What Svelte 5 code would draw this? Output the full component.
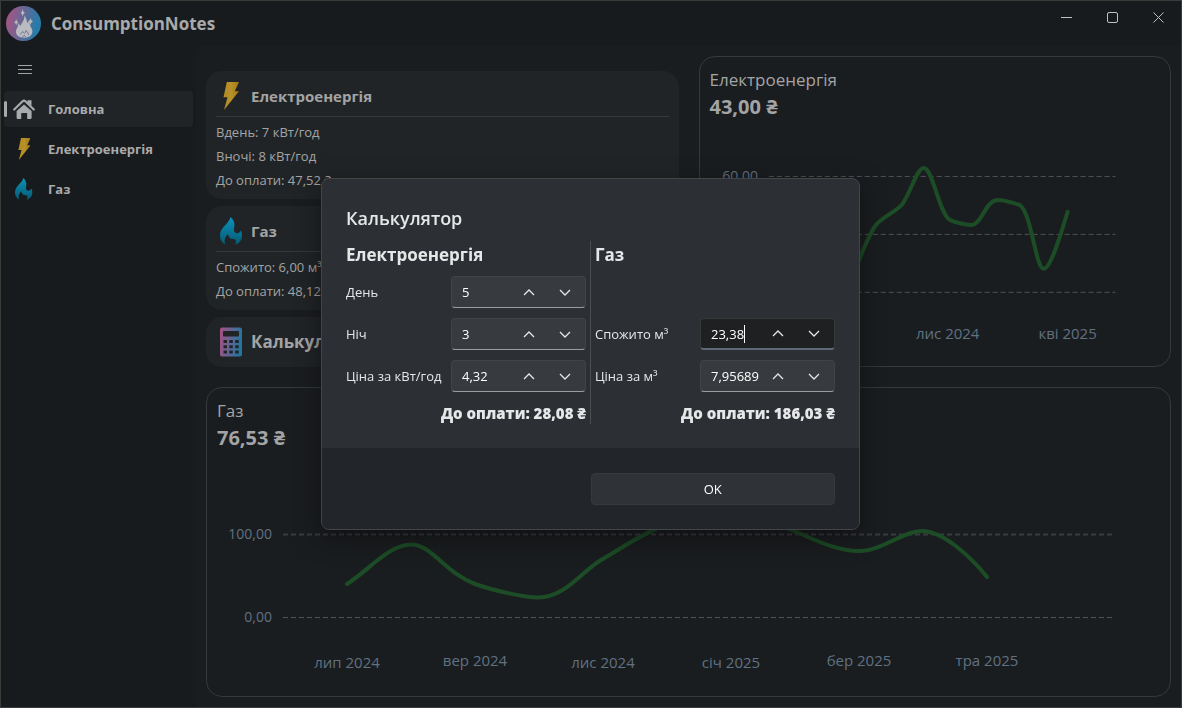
<script>
  const nav = [
    { label: 'Головна', icon: 'home', active: true },
    { label: 'Електроенергія', icon: 'bolt', active: false },
    { label: 'Газ', icon: 'flame', active: false }
  ];
  const powerFields = [
    { id: 'day', label: 'День', value: '5' },
    { id: 'night', label: 'Ніч', value: '3' },
    { id: 'power-price', label: 'Ціна за кВт/год', value: '4,32' }
  ];
  const gasFields = [
    { id: 'gas-used', label: 'Спожито м³', value: '23,38', focused: true },
    { id: 'gas-price', label: 'Ціна за м³', value: '7,95689' }
  ];
  const powerMonths = [
    { x: 126, y: 216, label: 'чер 2024' },
    { x: 248, y: 218, label: 'лис 2024' },
    { x: 368, y: 218, label: 'кві 2025' }
  ];
  const gasMonths = [
    { x: 140, y: 216, label: 'лип 2024' },
    { x: 268, y: 214, label: 'вер 2024' },
    { x: 396, y: 216, label: 'лис 2024' },
    { x: 524, y: 216, label: 'січ 2025' },
    { x: 652, y: 214, label: 'бер 2025' },
    { x: 780, y: 214, label: 'тра 2025' }
  ];
</script>

{#snippet icon(name)}
  {#if name === 'home'}
    <svg class="glyph home" viewBox="0 0 22 20" aria-hidden="true">
      <path d="M14.5 1.2h4v5.6l-4-3.4z" fill="#a9abac" />
      <path d="M1.2 10.6 9.6 2.3q1.4-1.2 2.8 0l8.4 8.3" fill="none" stroke="#a9abac" stroke-width="2.1" stroke-linecap="round" stroke-linejoin="round" />
      <path d="M3.6 12 11 5.6l7.600 6.400v6.800q0 1.200-1.200 1.200h-3.200v-5.200q0-.8-.8-.8H9q-.8 0-.8.8V20H4.800q-1.200 0-1.200-1.200z" fill="#a9abac" />
    </svg>
  {:else if name === 'bolt'}
    <svg class="glyph" viewBox="0 0 16 28" aria-hidden="true">
      <defs><linearGradient id="bolt" x1="0" x2="1"><stop stop-color="#b48a22" /><stop offset=".5" stop-color="#b79129" /><stop offset="1" stop-color="#a37717" /></linearGradient></defs>
      <path d="M3.8 0H16l-4.2 9.3H16L1 28l3.5-12.7H.5z" fill="url(#bolt)" />
    </svg>
  {:else}
    <svg class="glyph" viewBox="0 0 22 28" aria-hidden="true">
      <defs><linearGradient id="gas" x2="0" y2="1"><stop stop-color="#0a93bd" /><stop offset="1" stop-color="#075870" /></linearGradient></defs>
      <path d="M10.5 0C9 7 0 10 0 18.5 0 22.5 2 26 5.5 27.5 4 24 4.5 20 8 17c.5 3 2 5 5 5s4 2.5 2 6c4-1.500 7-4.500 7-9.500 0-2.300-.4-4-1.200-5-1 2-2.300 3-3.800 2.800-3-.3-3.500-3.300-2.700-6.300C15 6 13.500 2.500 10.500 0z" fill="url(#gas)" />
    </svg>
  {/if}
{/snippet}

{#snippet field(f)}
  <div class="row">
    <label for={f.id}>{f.label}</label>
    <div class="number" class:focused={f.focused}>
      <span class="entry"><input id={f.id} type="text" value={f.value} />{#if f.focused}<i class="caret"></i>{/if}</span>
      <button type="button" aria-label="Збільшити"><svg viewBox="0 0 12 7"><path d="M1 6l5-5 5 5" /></svg></button>
      <button type="button" aria-label="Зменшити"><svg viewBox="0 0 12 7"><path d="M1 1l5 5 5-5" /></svg></button>
    </div>
  </div>
{/snippet}

<div class="window">
  <header>
    <svg class="logo" viewBox="0 0 35 35" aria-hidden="true">
      <defs><linearGradient id="brand" x2="1" y2=".2"><stop stop-color="#b0527f" /><stop offset=".5" stop-color="#6b6695" /><stop offset="1" stop-color="#227da8" /></linearGradient></defs>
      <circle cx="17.500" cy="17.500" r="17.500" fill="url(#brand)" />
      <g fill="#b9bbc0">
        <path d="M18.400 9.500c1.300 2 2.400 3.800 2.500 6.200.1 1 .7 1.500 1.200.5l.6-1.400c1 2 1 3.500 1.500 5 1 2 2.300 3.200 2.200 6-.2 3.800-3.400 6-8.400 6s-8-2.200-8-6.200c0-2.500 1.300-3.700 2-5.700.3-1 .2-2 .1-3 1.200.8 1.700 2 2.300 3 .5-1.500 1.300-2.600 2.200-4 1.200-2 1.900-3.900 1.800-6.400z" />
        <path d="M16.700 3.200q.4 3 2.300 3.600-1.900.6-2.300 3.600-.4-3-2.300-3.600 1.900-.6 2.300-3.600zM10.200 13q.3 2.600 2 3.300-1.700.7-2 3.300-.3-2.600-2-3.300 1.700-.7 2-3.300zM24.500 12q.3 2.800 2.400 3.500-2.100.7-2.400 3.500-.3-2.800-2.300-3.500 2-.7 2.300-3.500z" />
      </g>
      <path d="M14 28.500q1.800-1.200 2.600-3l1.800 1.700q1.600-.8 1.700-2.700 2.200 2.500 2.600 4.500M16 31.300q1.600-.8 2-2 1.400.8 1.700 2" fill="none" stroke="#62678f" stroke-width=".8" />
    </svg>
    <h1>ConsumptionNotes</h1>
    <div class="caption">
      <button type="button" aria-label="Згорнути"><svg viewBox="0 0 11 11"><path d="M0 5.500h11" /></svg></button>
      <button type="button" aria-label="Розгорнути"><svg viewBox="0 0 11 11"><rect x=".5" y=".5" width="10" height="10" rx="1.500" /></svg></button>
      <button type="button" aria-label="Закрити"><svg viewBox="0 0 11 11"><path d="M.5.5l10 10M10.500.5l-10 10" /></svg></button>
    </div>
  </header>

  <div class="body">
    <nav>
      <button type="button" class="burger" aria-label="Меню"><svg viewBox="0 0 14 9"><path d="M0 .5h14M0 4.500h14M0 8.500h14" /></svg></button>
      {#each nav as item}
        <a href="#{item.icon}" class:active={item.active}>
          <span class="slot">{@render icon(item.icon)}</span>{item.label}
        </a>
      {/each}
    </nav>

    <main>
      <div class="cards">
        <section class="card">
          <h2><span class="slot">{@render icon('bolt')}</span>Електроенергія</h2>
          <p>Вдень: 7 кВт/год</p>
          <p>Вночі: 8 кВт/год</p>
          <p>До оплати: 47,52 ₴</p>
        </section>
        <section class="card">
          <h2><span class="slot">{@render icon('flame')}</span>Газ</h2>
          <p>Спожито: 6,00 м³</p>
          <p>До оплати: 48,12 ₴</p>
        </section>
        <button type="button" class="card calc">
          <span class="slot">
            <svg class="glyph" viewBox="0 0 22 30" aria-hidden="true">
              <defs><linearGradient id="calc" x2="1" y2=".2"><stop stop-color="#a94f80" /><stop offset=".5" stop-color="#676493" /><stop offset="1" stop-color="#23759d" /></linearGradient></defs>
              <path fill="url(#calc)" fill-rule="evenodd" d="M2 .5h18q2 0 2 2v25q0 2-2 2H2q-2 0-2-2v-25q0-2 2-2zM4 4q-1 0-1 1v3.500q0 1 1 1h14q1 0 1-1V5q0-1-1-1zM3.500 13v3h3.500v-3zM9.300 13v3h3.500v-3zM15.200 13v3h3.500v-3zM3.500 18.300v3h3.500v-3zM9.300 18.300v3h3.500v-3zM15.200 18.300v3h3.500v-3zM3.500 23.600v3h3.500v-3zM9.300 23.600v3h3.500v-3zM15.200 23.600v3h3.500v-3z" />
            </svg>
          </span>Калькулятор
        </button>
      </div>

      <section class="chart">
        <h3>Електроенергія</h3>
        <strong>43,00 ₴</strong>
        <svg viewBox="0 0 471 245" role="img" aria-label="Витрати на електроенергію">
          <g class="grid"><path d="M69 55.500h347M69 113.500h347M69 171.500h347" /></g>
          <g class="axis">
            <text class="value" x="58" y="60">60,00</text>
            <text class="value" x="58" y="118">40,00</text>
            <text class="value" x="58" y="176">20,00</text>
            {#each powerMonths as m}<text x={m.x} y={m.y}>{m.label}</text>{/each}
          </g>
          <path class="line" d="M151 158C160 140 168 113 177 103C185 95 194 92 202 84C210 74 217 47 224 47C233 47 239 92 250 99C257 102 265 104 272 104C282 104 286 79 298 79C306 79 313 82 320 84C332 92 336 148 344 148C351 148 361 114 368 91" />
        </svg>
      </section>

      <section class="chart wide">
        <h3>Газ</h3>
        <strong>76,53 ₴</strong>
        <svg viewBox="0 0 963 244" role="img" aria-label="Витрати на газ">
          <g class="grid"><path class="soft" d="M76 82.500h830" /><path d="M76 165.500h830" /></g>
          <g class="axis">
            <text class="value" x="65" y="87">100,00</text>
            <text class="value" x="65" y="170">0,00</text>
            {#each gasMonths as m}<text x={m.x} y={m.y}>{m.label}</text>{/each}
          </g>
          <path class="line" d="M140 132C161 119 182 92.500 204 92.500C225 92.500 238 121 268 132C288 139 318 145.500 331 145.500C358 145.500 374 120 394 108C418 94 436 81 458 73C500 58 550 62 580 76C605 86 627 99 652 99C675 99 696 79 715 79C736 79 764 105 780 125" />
        </svg>
      </section>
    </main>
  </div>
</div>

<div class="overlay">
  <div class="dialog" role="dialog" aria-labelledby="dialog-title">
    <div class="content">
      <h2 id="dialog-title">Калькулятор</h2>
      <div class="columns">
        <div class="column">
          <h3>Електроенергія</h3>
          {#each powerFields as f}{@render field(f)}{/each}
          <p>До оплати: 28,08 ₴</p>
        </div>
        <div class="column gas">
          <h3>Газ</h3>
          <div class="row"></div>
          {#each gasFields as f}{@render field(f)}{/each}
          <p>До оплати: 186,03 ₴</p>
        </div>
      </div>
    </div>
    <footer><button type="button">OK</button></footer>
  </div>
</div>

<style>
  :global(body) { margin: 0; background: #181b1e; }
  .window, .overlay { font-family: "Open Sans", "Noto Sans", sans-serif; font-size: 13px; line-height: 24px; color: #a3a4a5; }
  .window, .window :global(*), .overlay, .overlay :global(*) { box-sizing: border-box; }
  h1, h2, h3, p { margin: 0; }
  button { font: inherit; color: inherit; border: 0; background: none; padding: 0; }
  svg { display: block; flex: none; }
  .window { min-height: 100vh; display: flex; flex-direction: column; border: 1px solid #3b3b3a; background: #181b1e; }

  header { display: flex; height: 45px; padding-left: 5px; }
  .logo { width: 35px; height: 35px; margin-top: 5px; }
  h1 { margin-left: 10px; font-size: 17px; line-height: 46px; font-weight: 700; color: #a9aaab; }
  .caption { display: flex; margin-left: auto; height: 32px; }
  .caption button { width: 46px; display: grid; place-items: center; }
  .caption svg { width: 11px; height: 11px; fill: none; stroke: #c0c0c0; }

  .body { flex: 1; display: flex; }
  nav { width: 195px; flex: none; padding: 5px 3px 0; display: flex; flex-direction: column; gap: 4px; }
  .burger { width: 42px; height: 36px; display: grid; place-items: center; }
  .burger svg { width: 14px; height: 9px; stroke: #a3a4a5; }
  nav a { display: flex; align-items: center; height: 36px; border-radius: 4px; color: #a9aaab; font-weight: 700; text-decoration: none; }
  nav .slot { width: 40px; height: 22px; margin-right: 4px; }
  nav a.active { background: #212427; }
  nav a.active::before { content: ""; width: 3px; height: 16px; margin-right: -3px; border-radius: 2px; background: #a9aaab; }
  .slot { display: flex; justify-content: center; align-items: center; }
  .glyph { height: 100%; width: auto; }
  .home { height: 20px; }

  main { flex: 1; min-width: 0; padding: 10px; display: grid; grid-template-columns: 1fr 1fr; gap: 20px; align-content: start; background: #1a1d1f; border-top-left-radius: 8px; }
  .cards { align-self: end; display: flex; flex-direction: column; gap: 7px; }
  .card { border-radius: 16px; background: #212426; padding: 0 10px 7px; }
  .card h2 { display: flex; align-items: center; height: 46px; padding-top: 6px; margin-bottom: 3px; border-bottom: 1px solid #35383a; font-size: 15px; font-weight: 700; }
  .card .slot { width: 30px; height: 28px; margin-right: 5px; }
  .card.calc { display: flex; align-items: center; height: 50px; padding: 1px 10px 0; font-size: 17px; font-weight: 700; }
  .calc .slot { height: 30px; }

  .chart { border: 1px solid #35393b; border-radius: 16px; padding-top: 9px; }
  .wide { grid-column: 1 / -1; }
  .chart h3, .chart strong { display: block; padding-left: 10px; line-height: 27px; }
  .chart h3 { font-size: 17px; font-weight: 400; }
  .chart strong { padding-bottom: 1px; font-size: 20px; line-height: 27px; }
  .chart svg { width: 100%; height: auto; }
  .grid path { fill: none; stroke: #505355; stroke-dasharray: 5 3; }
  .grid .soft { stroke: #393c3e; stroke-width: 2; }
  .axis text { font-size: 15px; fill: #607182; text-anchor: middle; }
  .axis .value { font-size: 14px; text-anchor: end; }
  .line { fill: none; stroke: #1c4d26; stroke-width: 4; stroke-linecap: round; stroke-linejoin: round; }

  .overlay { position: fixed; inset: 0; display: flex; align-items: center; justify-content: center; padding-right: 1px; color: #e6e7e8; }
  .dialog { width: 539px; max-width: 100%; border: 1px solid #424548; border-radius: 8px; overflow: hidden; background: #2c2f33; box-shadow: 0 8px 24px rgb(12 8 12 / 60%); }
  .content { padding: 24px; }
  .content h2 { font-size: 18px; line-height: 30px; font-weight: 600; margin-bottom: 8px; }
  .columns { display: grid; grid-template-columns: minmax(0, 1fr) 245px; gap: 4px; }
  .column { display: flex; flex-direction: column; gap: 10px; }
  .gas { border-left: 1px solid #4c4f52; padding-left: 4px; }
  .column h3 { padding-top: 2px; font-size: 17px; line-height: 23px; font-weight: 700; }
  .column p { font-size: 15px; line-height: 22px; font-weight: 800; text-align: right; }
  .row { display: flex; align-items: center; justify-content: space-between; height: 32px; }
  .row label { white-space: nowrap; }
  .number { width: 135px; height: 32px; display: flex; align-items: center; padding: 0 2px 0 10px; border: 1px solid #404347; border-bottom-color: #9b9da0; border-radius: 4px; background: #373a3e; color: #fff; }
  .number.focused { background: #1f2022; border-color: #36393c; border-bottom: 2px solid #5f6975; }
  .entry { flex: 1; min-width: 0; display: flex; align-items: center; }
  .entry input { width: 100%; min-width: 0; border: 0; padding: 0; margin: 0; background: none; color: inherit; font: inherit; outline: none; }
  .focused input { width: auto; field-sizing: content; }
  .caret { width: 1px; height: 18px; background: #fff; }
  .number button { width: 36px; height: 28px; display: grid; place-items: center; }
  .number svg { width: 12px; height: 7px; fill: none; stroke: #e6e7e8; stroke-width: 1.300; }
  footer { display: flex; justify-content: flex-end; padding: 25px 24px 24px; background: #222529; }
  footer button { width: 50%; height: 32px; border: 1px solid #36393d; border-radius: 4px; background: #2f3236; color: #fff; }
</style>
